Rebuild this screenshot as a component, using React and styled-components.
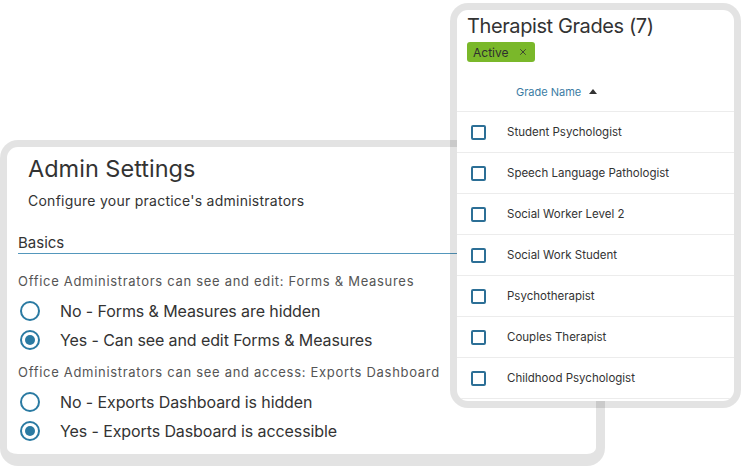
import React from 'react';
import styled, { createGlobalStyle } from 'styled-components';
import { X } from 'lucide-react';

const GlobalStyle = createGlobalStyle`
    html, body {
        margin: 0;
        padding: 0;
        background: #ffffff;
    }
    body {
        font-family: "Inter", "Noto Sans", sans-serif;
        color: #333333;
    }
`

const grades = [
    'Student Psychologist',
    'Speech Language Pathologist',
    'Social Worker Level 2',
    'Social Work Student',
    'Psychotherapist',
    'Couples Therapist',
    'Childhood Psychologist',
];

const settings = [
    {
        question: 'Office Administrators can see and edit: Forms & Measures',
        options: [
            { label: 'No - Forms & Measures are hidden', checked: false },
            { label: 'Yes - Can see and edit Forms & Measures', checked: true },
        ],
    },
    {
        question: 'Office Administrators can see and access: Exports Dashboard',
        options: [
            { label: 'No - Exports Dashboard is hidden', checked: false },
            { label: 'Yes - Exports Dasboard is accessible', checked: true },
        ],
    },
];

const App = () => {
    return (
        <>
            <GlobalStyle />
            <Stage>
                <AdminCard>
                    <AdminTitle>Admin Settings</AdminTitle>
                    <AdminSubtitle>Configure your practice's administrators</AdminSubtitle>
                    <SectionHeading>Basics</SectionHeading>
                    {settings.map(setting => (
                        <Setting key={setting.question}>
                            <Question>{setting.question}</Question>
                            {setting.options.map(option => (
                                <RadioRow key={option.label}>
                                    <Radio checked={option.checked} />
                                    <span>{option.label}</span>
                                </RadioRow>
                            ))}
                        </Setting>
                    ))}
                </AdminCard>

                <GradesCard>
                    <GradesHeader>
                        <GradesTitle>Therapist Grades (7)</GradesTitle>
                        <FilterChip>
                            Active
                            <X size={10} strokeWidth={2} />
                        </FilterChip>
                    </GradesHeader>
                    <ColumnHeader>
                        Grade Name
                        <svg width="8" height="5" viewBox="0 0 8 5">
                            <path d="M0 5 L4 0 L8 5 Z" fill="#333" />
                        </svg>
                    </ColumnHeader>
                    <GradeList>
                        {grades.map(grade => (
                            <GradeRow key={grade}>
                                <Checkbox />
                                <span>{grade}</span>
                            </GradeRow>
                        ))}
                    </GradeList>
                </GradesCard>
            </Stage>
        </>
    )
}

export default App;


const Stage = styled.div`
    position: relative;
    width: 741px;
    height: 466px;
    overflow: hidden;
`

const Card = styled.div`
    position: absolute;
    box-sizing: border-box;
    background: #ffffff;
    background-clip: padding-box;
    border: 7px solid rgba(0, 0, 0, 0.11);
    border-radius: 18px;
`

const AdminCard = styled(Card)`
    left: 0;
    top: 140px;
    width: 605px;
    height: 326px;
    border-right-width: 9px;
    border-bottom-width: 12px;
    padding: 8px 10px 0 11px;
`

const AdminTitle = styled.div`
    margin-left: 10px;
    font-size: 23.5px;
    line-height: 28px;
    color: #333;
`

const AdminSubtitle = styled.div`
    margin: 9px 0 0 10px;
    font-size: 14px;
    line-height: 18px;
    letter-spacing: 0.25px;
    color: #333;
`

const SectionHeading = styled.div`
    margin-top: 23px;
    font-size: 15px;
    line-height: 20px;
    color: #333;
    border-bottom: 1px solid #5497bc;
`

const Setting = styled.div`
    display: flex;
    flex-direction: column;
    margin-top: 19px;
    & + & {
        margin-top: 10px;
    }
`

const Question = styled.div`
    font-size: 13px;
    line-height: 17px;
    letter-spacing: 0.7px;
    color: #555;
    margin-bottom: 6px;
`

const RadioRow = styled.label`
    display: flex;
    align-items: center;
    gap: 20px;
    height: 29px;
    padding-left: 2px;
    font-size: 16px;
    letter-spacing: -0.1px;
    color: #333;
`

const Radio = styled.span`
    position: relative;
    box-sizing: border-box;
    width: 20px;
    height: 20px;
    border: 2px solid #2a7aa2;
    border-radius: 50%;
    flex-shrink: 0;
    &::after {
        content: '';
        display: ${({ checked }) => checked ? 'block' : 'none'};
        position: absolute;
        left: 3px;
        top: 3px;
        width: 10px;
        height: 10px;
        border-radius: 50%;
        background: #2a7aa2;
    }
`

const GradesCard = styled(Card)`
    left: 450px;
    top: 3px;
    width: 291px;
    height: 405px;
    display: flex;
    flex-direction: column;
    overflow: hidden;
`

const GradesHeader = styled.div`
    display: flex;
    flex-direction: column;
    align-items: flex-start;
    padding: 3px 0 0 10px;
`

const GradesTitle = styled.div`
    font-size: 20px;
    line-height: 26px;
    letter-spacing: -0.4px;
    color: #333;
`

const FilterChip = styled.div`
    display: flex;
    align-items: center;
    gap: 10px;
    margin-top: 3px;
    height: 20px;
    padding: 0 7px 0 6px;
    border-radius: 3px;
    background: #7ab82a;
    font-size: 12px;
    color: #2f2f2f;
    svg {
        color: #333;
    }
`

const ColumnHeader = styled.div`
    display: flex;
    align-items: center;
    gap: 8px;
    height: 50px;
    padding: 10px 0 0 59px;
    font-size: 11px;
    color: #3b7ca3;
    border-bottom: 1px solid #ececec;
    box-sizing: border-box;
`

const GradeList = styled.div`
    display: flex;
    flex-direction: column;
`

const GradeRow = styled.div`
    display: flex;
    align-items: center;
    gap: 21px;
    height: 41px;
    padding-left: 14px;
    box-sizing: border-box;
    border-bottom: 1px solid #ececec;
    font-size: 11.5px;
    color: #333;
`

const Checkbox = styled.span`
    box-sizing: border-box;
    width: 15px;
    height: 15px;
    border: 2px solid #2c6f96;
    border-radius: 2px;
    flex-shrink: 0;
`
